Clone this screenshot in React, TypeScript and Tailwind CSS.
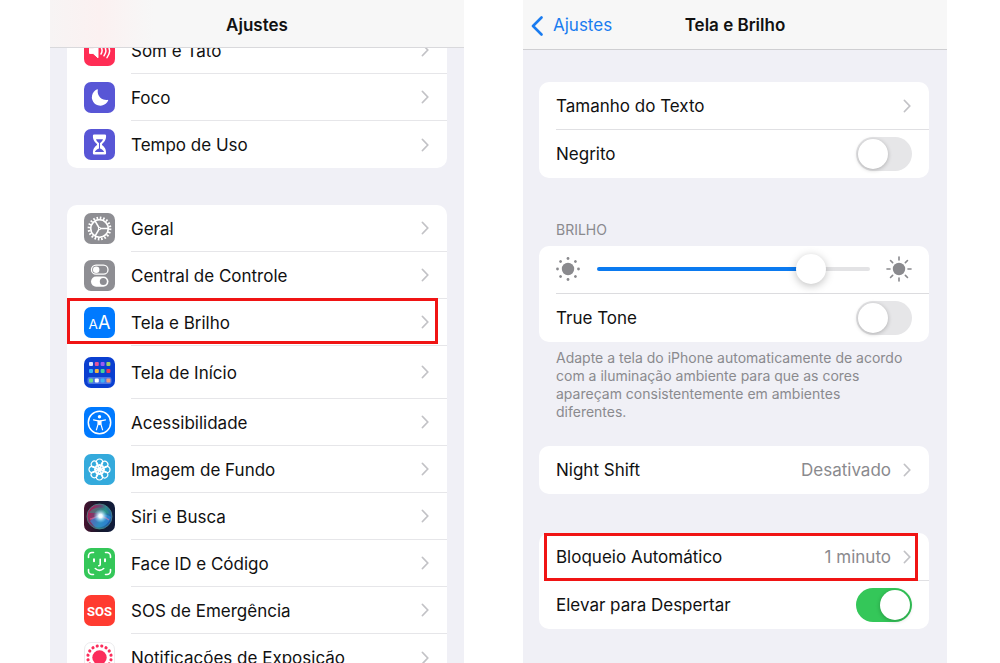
import { useState } from 'react';
import type { ReactNode } from 'react';

const dotAngles = [0, 45, 90, 135, 180, 225, 270, 315];

function Chevron() {
  return (
    <svg width="8" height="14" viewBox="0 0 8 14" fill="none" className="shrink-0" aria-hidden="true">
      <path d="M1.500 1.500L6.800 7l-5.300 5.500" stroke="#c2c2c6" strokeWidth="1.800" strokeLinecap="round" strokeLinejoin="round" />
    </svg>
  );
}

function Tile({ className, children }: { className: string; children: ReactNode }) {
  return (
    <span className={`block size-[31px] shrink-0 overflow-hidden rounded-[7px] ${className}`}>
      <svg width="31" height="31" viewBox="0 0 31 31" fill="none" aria-hidden="true">
        {children}
      </svg>
    </span>
  );
}

function SoundIcon() {
  return (
    <Tile className="bg-[#ff2d55]">
      <path d="M5.5 13.2h3.6l4.9-4.4v14l-4.9-4.4H5.5z" fill="#fff" stroke="#fff" strokeLinejoin="round" />
      <path d="M17 12.2q2.200 3.300 0 6.800M20 10.400q3.700 5.200 0 10.400M23 8.600q5.200 7 0 14" stroke="#fff" strokeWidth="1.500" strokeLinecap="round" />
    </Tile>
  );
}

function MoonIcon() {
  return (
    <Tile className="bg-[#5856d6]">
      <path d="M13.200 7.300a8.500 8.500 0 1 0 11 11.200.5.5 0 0 0-.7-.6A8.600 8.600 0 0 1 13.800 7.900a.5.5 0 0 0-.6-.6z" fill="#fff" />
    </Tile>
  );
}

function HourglassIcon() {
  return (
    <Tile className="bg-[#5856d6]">
      <path d="M10.200 5.500h10.600a1.300 1.300 0 0 1 1.300 1.300c0 4.200-1.500 6-4.100 8.200v1c2.600 2.200 4.100 4 4.100 8.200a1.300 1.300 0 0 1-1.300 1.300H10.200a1.300 1.300 0 0 1-1.300-1.300c0-4.200 1.500-6 4.100-8.200v-1c-2.600-2.200-4.100-4-4.100-8.200a1.300 1.300 0 0 1 1.300-1.300z" fill="#fff" />
      <path d="M12 10.300h7c-.6 1.700-1.700 2.700-3 3.900v5.200c1.700.8 3.200 1.600 4.200 3.600h-9.400c1-2 2.500-2.800 4.200-3.600v-5.200c-1.300-1.200-2.400-2.200-3-3.900z" fill="#5856d6" />
    </Tile>
  );
}

function GearIcon() {
  return (
    <Tile className="bg-[#8e8e93]">
      <circle cx="15.5" cy="15.5" r="10.600" stroke="#fff" strokeWidth="2.600" strokeDasharray="1.600 1.730" />
      <circle cx="15.5" cy="15.5" r="8.800" stroke="#fff" strokeWidth="1.700" />
      <path d="M16 15.500h8M15.200 15l-4.200-7.200M15.200 16L11 23.200" stroke="#fff" strokeWidth="1.500" />
      <circle cx="15.5" cy="15.5" r="1.500" fill="#fff" />
      <circle cx="15.5" cy="15.5" r="0.600" fill="#8e8e93" />
    </Tile>
  );
}

function ControlCenterIcon() {
  return (
    <Tile className="bg-[#8e8e93]">
      <rect x="7.500" y="5.200" width="16.500" height="9" rx="4.500" stroke="#fff" strokeWidth="1.300" />
      <circle cx="12.200" cy="9.700" r="3.200" fill="#fff" />
      <rect x="7" y="16.500" width="17.500" height="10.200" rx="5.100" fill="#fff" />
      <circle cx="19.300" cy="21.600" r="3.500" fill="#8e8e93" />
    </Tile>
  );
}

function DisplayIcon() {
  return (
    <Tile className="bg-[#007aff]">
      <text x="4.500" y="22" fill="#fff" fontFamily="Inter, sans-serif" fontSize="13.500">A</text>
      <text x="14" y="22" fill="#fff" fontFamily="Inter, sans-serif" fontSize="18">A</text>
    </Tile>
  );
}

function HomeScreenIcon() {
  const apps = [
    ['#d9e6ff', '#e0559a', '#9a5cf0', '#9bd06a'],
    ['#35b8f5', '#f3b53f', '#46d39a', '#e8365a'],
    ['#6ddc8b', '#ffffff', '#3fb4f2', '#f09a7a'],
  ];
  const tops = [5, 12, 21.500];
  return (
    <Tile className="bg-[#0a3fd0]">
      <rect x="3.500" y="20" width="24" height="7" rx="2" fill="#4a76e6" />
      {apps.map((row, r) =>
        row.map((color, c) => (
          <rect key={`${r}-${c}`} x={5 + c * 5.8} y={tops[r]} width="4" height="4" rx="1" fill={color} />
        ))
      )}
    </Tile>
  );
}

function AccessibilityIcon() {
  return (
    <Tile className="bg-[#007aff]">
      <circle cx="15.5" cy="15.5" r="11.200" stroke="#fff" strokeWidth="1.500" />
      <circle cx="15.5" cy="9.700" r="1.700" fill="#fff" />
      <path d="M9.500 12.900l4.700.9v3l-1.800 6M21.500 12.900l-4.700.9v3l1.800 6" stroke="#fff" strokeWidth="1.200" strokeLinecap="round" strokeLinejoin="round" />
      <path d="M13.700 13.300h3.600v4.200l-1.800.8-1.800-.8z" fill="#fff" />
    </Tile>
  );
}

function WallpaperIcon() {
  return (
    <Tile className="bg-[#34aadc]">
      {dotAngles.map((angle) => (
        <g key={angle} transform={`rotate(${angle} 15.5 15.5)`} stroke="#fff" strokeWidth="1.200">
          <circle cx="15.5" cy="8.200" r="3.200" />
          <ellipse cx="15.5" cy="12.600" rx="1.500" ry="2" />
        </g>
      ))}
      <circle cx="15.5" cy="15.5" r="1.200" fill="#fff" />
    </Tile>
  );
}

function SiriIcon() {
  return (
    <Tile className="bg-[linear-gradient(to_right,#47122f,#14182c_50%,#101c3c)]">
      <defs>
        <linearGradient id="siri-base" x1="0" y1="0.300" x2="1" y2="0.700">
          <stop offset="0" stopColor="#b3174f" />
          <stop offset="0.400" stopColor="#654a75" />
          <stop offset="0.600" stopColor="#2c8b8f" />
          <stop offset="1" stopColor="#1c4fb5" />
        </linearGradient>
        <radialGradient id="siri-glow">
          <stop offset="0" stopColor="#fff" />
          <stop offset="0.250" stopColor="#eefcff" />
          <stop offset="1" stopColor="#7fd6ff" stopOpacity="0" />
        </radialGradient>
      </defs>
      <circle cx="15.5" cy="15.5" r="12.500" fill="url(#siri-base)" stroke="#4b8a8a" strokeWidth="0.800" />
      <path d="M5 12c4-7 16-8 21 1-5-2-14-1-21-1z" fill="#2b9c83" opacity="0.500" />
      <path d="M6 20c5-6 15-9 21-4-3 9-12 13-17 9z" fill="#3292e8" opacity="0.600" />
      <path d="M6 18c5 0 8-7 19 1" stroke="#ff6f9e" strokeWidth="1.500" opacity="0.500" />
      <circle cx="16.500" cy="15" r="7" fill="url(#siri-glow)" />
    </Tile>
  );
}

function FaceIdIcon() {
  return (
    <Tile className="bg-[#34c759]">
      <g stroke="#fff" strokeWidth="1.600" strokeLinecap="round" strokeLinejoin="round">
        <path d="M4.500 9.500V8A3.500 3.500 0 0 1 8 4.500h1.500M21.500 4.500H23A3.500 3.500 0 0 1 26.500 8v1.500M26.500 21.500V23a3.500 3.500 0 0 1-3.500 3.500h-1.500M9.500 26.500H8A3.500 3.500 0 0 1 4.500 23v-1.500" />
        <path d="M10 11.200v2M21 11.200v2" strokeWidth="2" />
        <path d="M16.200 11.200v5.300q0 1.300-1.500 1.300M11.300 20.500q4.200 3.700 8.400 0" />
      </g>
    </Tile>
  );
}

function SosIcon() {
  return (
    <Tile className="bg-[#ff3b30]">
      <text x="15.5" y="20.500" textAnchor="middle" fill="#fff" fontFamily="Roboto, sans-serif" fontWeight="700" fontSize="13">SOS</text>
    </Tile>
  );
}

function ExposureIcon() {
  return (
    <Tile className="border border-[#ececee] bg-white">
      <circle cx="14.500" cy="14.500" r="7.200" fill="#fb2d5b" />
      {Array.from({ length: 16 }, (_, i) => (
        <circle key={i} cx="14.500" cy="2.800" r="1.600" fill="#fb2d5b" transform={`rotate(${i * 22.5 + 11.25} 14.5 14.5)`} />
      ))}
    </Tile>
  );
}

function SunIcon({ rays }: { rays?: boolean }) {
  return (
    <svg width="26" height="26" viewBox="0 0 26 26" className="shrink-0" aria-hidden="true">
      <circle cx="13" cy="13" r="6.200" fill="#8a8a8e" />
      {dotAngles.map((angle) =>
        rays ? (
          <path key={angle} d="M13 1v3" stroke="#8a8a8e" strokeWidth="1.600" strokeLinecap="round" transform={`rotate(${angle} 13 13)`} />
        ) : (
          <circle key={angle} cx="13" cy="2.500" r="1.400" fill="#8a8a8e" transform={`rotate(${angle} 13 13)`} />
        )
      )}
    </svg>
  );
}

interface MenuRowProps {
  icon: ReactNode;
  label: string;
  last?: boolean;
  tall?: boolean;
  highlighted?: boolean;
}

function MenuRow({ icon, label, last, tall, highlighted }: MenuRowProps) {
  return (
    <li className="relative">
      <a href="#" className={`flex items-center gap-4 pl-[17px] ${tall ? 'h-[53px]' : 'h-[47px]'}`}>
        {icon}
        <span className={`flex h-full flex-1 items-center justify-between pr-[18px] ${last ? '' : 'border-b border-[#e6e6e9]'}`}>
          <span className="pt-[3px]">{label}</span>
          <Chevron />
        </span>
      </a>
      {highlighted && <span className="pointer-events-none absolute -top-px bottom-0.5 left-0 right-[9px] border-3 border-[#f01414]" />}
    </li>
  );
}

function Switch({ id, defaultChecked }: { id: string; defaultChecked?: boolean }) {
  return (
    <input
      id={id}
      type="checkbox"
      role="switch"
      defaultChecked={defaultChecked}
      className="h-[34px] w-14 shrink-0 appearance-none rounded-full bg-[#e6e6e8] p-0.5 before:block before:size-[30px] before:rounded-full before:bg-white before:shadow-[0_1px_4px_rgba(0,0,0,0.25)] checked:bg-[#34c759] checked:before:ml-[22px]"
    />
  );
}

function SwitchRow({ id, label, defaultChecked }: { id: string; label: string; defaultChecked?: boolean }) {
  return (
    <div className="flex h-12 items-center justify-between pr-[17px]">
      <label htmlFor={id} className="pt-0.5">{label}</label>
      <Switch id={id} defaultChecked={defaultChecked} />
    </div>
  );
}

function LinkRow({ label, value, divided }: { label: string; value?: string; divided?: boolean }) {
  return (
    <a href="#" className={`flex h-12 items-center justify-between pr-[18px] ${divided ? 'border-b border-[#e0e0e3]' : ''}`}>
      <span className="pt-0.5">{label}</span>
      <span className="flex items-center gap-3 text-[#8a8a8e]">
        <span className="pt-0.5">{value}</span>
        <Chevron />
      </span>
    </a>
  );
}

function BrightnessSlider() {
  const [value, setValue] = useState(82);
  // the thumb is 30px wide, so its centre travels from 15px to 100% - 15px
  const fill = `calc(15px + (100% - 30px) * ${value / 100})`;

  return (
    <div className="-ml-px flex h-12 items-center gap-4 pr-[17px]">
      <SunIcon />
      <input
        type="range"
        aria-label="Brilho"
        value={value}
        onChange={(e) => setValue(Number(e.target.value))}
        style={{ backgroundImage: `linear-gradient(to right, #0b7af0 ${fill}, #e3e3e5 ${fill})` }}
        className="h-1 min-w-0 flex-1 appearance-none rounded-full [&::-webkit-slider-thumb]:size-[30px] [&::-webkit-slider-thumb]:appearance-none [&::-webkit-slider-thumb]:rounded-full [&::-webkit-slider-thumb]:bg-white [&::-webkit-slider-thumb]:shadow-[0_2px_8px_rgba(0,0,0,0.25)]"
      />
      <SunIcon rays />
    </div>
  );
}

function SettingsScreen() {
  return (
    <section className="flex min-w-0 flex-[414] flex-col overflow-hidden bg-[#f0f0f6]">
      <header className="z-10 flex h-12 shrink-0 items-center justify-center border-b border-[#d9d9dc] bg-[linear-gradient(to_right,#f7f4f4,#fbf1f1_12%,#f7f7f7_25%)] pt-1">
        <h1 className="text-[17px] font-semibold">Ajustes</h1>
      </header>
      <div className="-mt-[21px] flex flex-col gap-[37px] pl-[17px] pr-[17px]">
        <ul className="rounded-[10px] bg-white">
          <MenuRow icon={<SoundIcon />} label="Som e Tato" />
          <MenuRow icon={<MoonIcon />} label="Foco" />
          <MenuRow icon={<HourglassIcon />} label="Tempo de Uso" last />
        </ul>
        <ul className="rounded-[10px] bg-white">
          <MenuRow icon={<GearIcon />} label="Geral" />
          <MenuRow icon={<ControlCenterIcon />} label="Central de Controle" />
          <MenuRow icon={<DisplayIcon />} label="Tela e Brilho" highlighted />
          <MenuRow icon={<HomeScreenIcon />} label="Tela de Início" tall />
          <MenuRow icon={<AccessibilityIcon />} label="Acessibilidade" />
          <MenuRow icon={<WallpaperIcon />} label="Imagem de Fundo" />
          <MenuRow icon={<SiriIcon />} label="Siri e Busca" />
          <MenuRow icon={<FaceIdIcon />} label="Face ID e Código" />
          <MenuRow icon={<SosIcon />} label="SOS de Emergência" />
          <MenuRow icon={<ExposureIcon />} label="Notificações de Exposição" last />
        </ul>
      </div>
    </section>
  );
}

function DisplayScreen() {
  return (
    <section className="flex min-w-0 flex-[424] flex-col overflow-hidden bg-[#f0f0f6]">
      <header className="grid h-[50px] shrink-0 grid-cols-[1fr_auto_1fr] items-center border-b border-[#cfcfd2] bg-[#f7f7f7] px-2 pt-0.5">
        <a href="#" className="flex items-center gap-2.5 text-[#1a7cf0]">
          <svg width="12" height="20" viewBox="0 0 12 20" fill="none" aria-hidden="true">
            <path d="M10.500 1.500L2 10l8.500 8.500" stroke="#1a7cf0" strokeWidth="2.600" strokeLinecap="round" strokeLinejoin="round" />
          </svg>
          Ajustes
        </a>
        <h1 className="text-[17px] font-semibold">Tela e Brilho</h1>
      </header>
      <div className="flex flex-col pl-4 pr-[18px] pt-8">
        <div className="rounded-[10px] bg-white pl-[17px]">
          <LinkRow label="Tamanho do Texto" divided />
          <SwitchRow id="negrito" label="Negrito" />
        </div>

        <h2 className="mt-[43px] pl-[17px] text-sm leading-[18px] text-[#8a8a8e]">BRILHO</h2>
        <div className="mt-[7px] rounded-[10px] bg-white pl-[17px]">
          <div className="-mt-px border-b border-[#dcdcdf]">
            <BrightnessSlider />
          </div>
          <SwitchRow id="true-tone" label="True Tone" />
        </div>
        <p className="mt-[7px] px-[17px] text-sm leading-[18px] text-[#8a8a8e]">
          Adapte a tela do iPhone automaticamente de acordo com a iluminação ambiente para que as cores apareçam
          consistentemente em ambientes diferentes.
        </p>

        <div className="mt-[25px] rounded-[10px] bg-white pl-[17px]">
          <LinkRow label="Night Shift" value="Desativado" />
        </div>

        <div className="relative mt-[39px] rounded-[10px] bg-white pl-[17px]">
          <LinkRow label="Bloqueio Automático" value="1 minuto" divided />
          <SwitchRow id="elevar" label="Elevar para Despertar" defaultChecked />
          <span className="pointer-events-none absolute left-[5px] right-[11px] top-0 h-12 border-3 border-[#f01414]" />
        </div>
      </div>
    </section>
  );
}

export default function App() {
  return (
    <main className="flex h-screen gap-[59px] overflow-hidden bg-white pl-[50px] pr-[53px] font-['Inter',sans-serif] text-[17px] text-[#111]">
      <SettingsScreen />
      <DisplayScreen />
    </main>
  );
}
